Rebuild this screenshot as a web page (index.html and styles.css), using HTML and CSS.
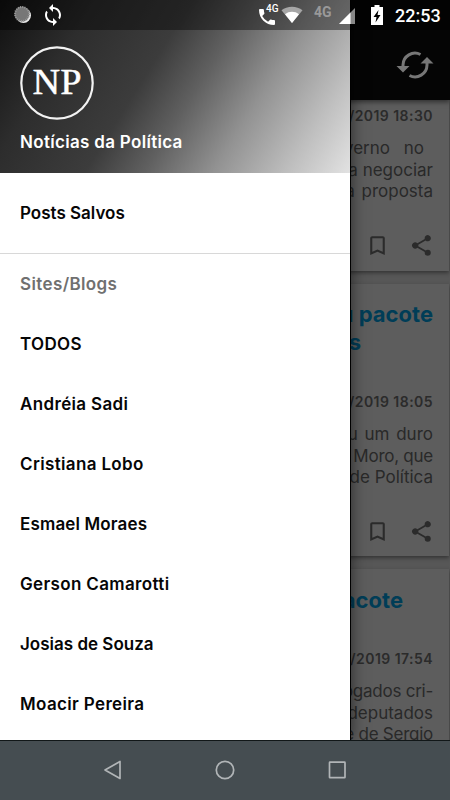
FILE: index.html
```html
<!DOCTYPE html>
<html lang="pt-BR">
<head>
<meta charset="utf-8">
<title>Notícias da Política</title>
<link rel="stylesheet" href="styles.css">
</head>
<body>
<div class="phone">
  <main class="feed">
    <header class="appbar">
      <svg width="38" height="30" viewBox="0 0 38 30"><g fill="none" stroke="#777" stroke-width="3"><path d="M7 18V15A12 12 0 0 1 24.500 4.500"/><path d="M31 12V15A12 12 0 0 1 13.500 25.500"/></g><path d="M.5 16h13L7 22.500zM24.500 13.500h13L31 7z" fill="#777"/></svg>
    </header>
    <article class="card first">
      <time>1/2019 18:30</time>
      <div class="excerpt"><p class="short">governo no</p><p>a negociar</p><p class="wide">a proposta</p></div>
      <div class="actions">
        <svg width="25" height="25" viewBox="0 0 24 24"><path d="M17 3H7c-1.100 0-2 .9-2 2v16l7-3 7 3V5c0-1.100-.9-2-2-2zm0 15-5-2.180L7 18V5h10z"/></svg>
        <svg width="25" height="25" viewBox="0 0 24 24"><path d="M18 16.080c-.76 0-1.440.3-1.960.77L8.910 12.700c.05-.23.09-.46.09-.7s-.04-.47-.09-.7l7.050-4.110A3 3 0 1 0 15 5c0 .24.040.47.090.7L8.040 9.810a3 3 0 1 0 0 4.380l7.120 4.160c-.05.21-.08.43-.08.65a2.920 2.920 0 1 0 2.920-2.920z"/></svg>
      </div>
    </article>
    <article class="card second">
      <h2><span>u pacote</span><span class="tail">s</span></h2>
      <time>1/2019 18:05</time>
      <div class="excerpt"><p class="wide">u um duro</p><p class="tight">Moro, que</p><p>de Política</p></div>
      <div class="actions">
        <svg width="25" height="25" viewBox="0 0 24 24"><path d="M17 3H7c-1.100 0-2 .9-2 2v16l7-3 7 3V5c0-1.100-.9-2-2-2zm0 15-5-2.180L7 18V5h10z"/></svg>
        <svg width="25" height="25" viewBox="0 0 24 24"><path d="M18 16.080c-.76 0-1.440.3-1.960.77L8.910 12.700c.05-.23.09-.46.09-.7s-.04-.47-.09-.7l7.050-4.110A3 3 0 1 0 15 5c0 .24.040.47.090.7L8.040 9.810a3 3 0 1 0 0 4.380l7.120 4.160c-.05.21-.08.43-.08.65a2.920 2.920 0 1 0 2.920-2.920z"/></svg>
      </div>
    </article>
    <article class="card third">
      <h2><span class="acote">pacote</span></h2>
      <time>1/2019 17:54</time>
      <div class="excerpt"><p class="tight">ogados cri-</p><p>deputados</p><p class="tight">e de Sergio</p></div>
    </article>
  </main>

  <aside class="drawer">
    <header class="profile">
      <svg class="logo" width="76" height="76" viewBox="0 0 76 76"><circle cx="38" cy="38" r="35.700" fill="none" stroke="#f2f2f2" stroke-width="2.200"/><text x="38" y="48.500" text-anchor="middle" textLength="49" lengthAdjust="spacingAndGlyphs">NP</text></svg>
      <h1>Notícias da Política</h1>
    </header>
    <nav>
      <a class="saved">Posts Salvos</a>
      <div class="label">Sites/Blogs</div>
      <a class="loose">TODOS</a>
      <a class="loose">Andréia Sadi</a>
      <a class="loose">Cristiana Lobo</a>
      <a class="snug">Esmael Moraes</a>
      <a class="loose">Gerson Camarotti</a>
      <a>Josias de Souza</a>
      <a class="loose">Moacir Pereira</a>
    </nav>
  </aside>

  <div class="status">
    <svg class="spin" width="20" height="20" viewBox="0 0 20 20"><circle cx="10.500" cy="10.500" r="7.500" fill="#e8e8e8"/><circle cx="9" cy="9" r="7.500" fill="#777"/><circle cx="9" cy="9" r="7" fill="none" stroke="#999" stroke-width="2" stroke-dasharray="1 1.200"/></svg>
    <svg class="sync" width="20" height="22" viewBox="2 1 20 22"><path fill="#fff" d="M12 4V1L8 5l4 4V6c3.310 0 6 2.690 6 6 0 1.010-.25 1.970-.7 2.800l1.460 1.460A7.930 7.930 0 0 0 20 12c0-4.420-3.580-8-8-8zm0 14c-3.310 0-6-2.690-6-6 0-1.010.25-1.970.7-2.800L5.240 7.740A7.930 7.930 0 0 0 4 12c0 4.420 3.580 8 8 8v3l4-4-4-4z"/></svg>
    <span class="call"><svg width="16" height="16" viewBox="3 3 18 18"><path fill="#fff" d="M20 15.500c-1.250 0-2.450-.2-3.570-.57a1 1 0 0 0-1.020.24l-2.200 2.200a15.050 15.050 0 0 1-6.590-6.590l2.200-2.210c.28-.26.36-.65.25-1C8.700 6.450 8.500 5.250 8.500 4c0-.55-.45-1-1-1H4c-.55 0-1 .45-1 1 0 9.390 7.610 17 17 17 .55 0 1-.45 1-1v-3.500c0-.55-.45-1-1-1z"/></svg><b>4G</b></span>
    <svg class="wifi" width="22" height="18" viewBox="0 0 22 18"><path fill="#a6a6a6" d="M11 17 .5 4.300C6-.6 16-.6 21.500 4.300z"/><path fill="#fff" d="M11 17 4 8.300c4-3.300 10-3.300 14 0z"/></svg>
    <span class="net">4G</span>
    <svg class="signal" width="16" height="16" viewBox="0 0 16 16"><path fill="#888" d="M0 16 16 0v16z"/><path fill="#fff" d="M0 16 11.500 4.500V16z"/></svg>
    <svg class="battery" width="12" height="20" viewBox="0 0 12 20"><path fill="#fff" d="M3.500 0h5v2H12v18H0V2h3.500z"/><path fill="#000" d="M7.500 5 2.500 12h3l-1 5.500 5-7.500h-3z"/></svg>
    <span class="clock">22:53</span>
  </div>

  <div class="navbar">
    <svg width="20" height="20" viewBox="0 0 20 20"><path d="M2 10 17 1.500v17z"/></svg>
    <svg width="20" height="20" viewBox="0 0 20 20"><circle cx="10" cy="10" r="8.700"/></svg>
    <svg width="20" height="20" viewBox="0 0 20 20"><rect x="2.500" y="2.200" width="15.500" height="15.500" rx=".5"/></svg>
  </div>
</div>
</body>
</html>
```
FILE: styles.css
```css
* { box-sizing: border-box; }
body { margin: 0; font-family: Inter, "Liberation Sans", sans-serif; }
h1, h2, p { margin: 0; }
svg { display: block; flex: none; }
.phone { position: relative; width: 450px; height: 800px; overflow: hidden; display: flex; flex-direction: column; background: #575757; }

.feed { height: 740px; overflow: hidden; display: flex; flex-direction: column; }
.appbar { position: relative; height: 100px; flex: none; background: #050505; padding: 50px 16px 0 0; display: flex; justify-content: flex-end; align-items: flex-start; box-shadow: 0 2px 5px rgba(0,0,0,.5); }
.card { flex: none; margin-right: 1px; padding-right: 16px; background: #5d5d5d; box-shadow: 0 2px 4px rgba(0,0,0,.4); display: flex; flex-direction: column; align-items: flex-end; white-space: nowrap; }
.first { height: 171px; padding-top: 6px; margin-bottom: 13px; }
.second { height: 272px; padding-top: 16px; margin-bottom: 13px; }
.third { height: 272px; padding-top: 17px; }
.card time { font-size: 14px; font-weight: 600; line-height: 20px; color: #2b2b2b; letter-spacing: .45px; }
.excerpt { margin-top: 12px; font-size: 17px; line-height: 21.700px; color: #292929; text-align: right; }
.short { padding-right: 9px; word-spacing: 9px; }
.wide { word-spacing: 2px; }
.tight { letter-spacing: -.25px; }
.card h2 { width: 100%; height: 92px; font-size: 22px; line-height: 28px; font-weight: 700; color: #003d57; display: flex; flex-direction: column; align-items: flex-end; }
.card.third h2 { height: 63px; }
.tail { padding-right: 72px; }
.acote { padding-right: 30px; }
.actions { display: flex; gap: 19px; margin: 30px -1px 0 0; fill: #2b2b2b; }

.drawer { position: absolute; left: 0; top: 0; width: 350px; height: 740px; background: #fff; box-shadow: 1px 0 0 #000, 2px 0 14px rgba(0,0,0,.5); clip-path: inset(0 -30px 0 0); }
.profile { height: 173px; padding: 45px 20px 0 19px; background: linear-gradient(122deg, #101010 0%, #2d2d2d 21%, #3c3c3c 42%, #606060 55%, #929292 70%, #bebebe 86%, #e2e2e2 100%); }
.logo text { font-family: "Liberation Serif", serif; font-size: 35px; fill: #fff; stroke: #fff; stroke-width: .4px; }
h1 { margin: 9px 0 0 1px; font-size: 17px; line-height: 24px; font-weight: 600; color: #fff; letter-spacing: .31px; }
nav { display: flex; flex-direction: column; padding-top: 10px; font-size: 17px; font-weight: 600; color: #060606; }
nav a, .label { height: 60px; line-height: 60px; padding-left: 20px; }
nav .saved { height: 71px; border-bottom: 1px solid #d8d8d8; }
.label { color: #707070; letter-spacing: .38px; }
.loose { letter-spacing: .35px; }
.snug { letter-spacing: .15px; }

.status { position: absolute; left: 0; top: 0; width: 450px; height: 30px; background: rgba(0,0,0,.4); color: #fff; display: flex; align-items: center; padding-left: 13px; }
.sync { margin-left: 10px; }
.call { flex: none; margin-left: 196px; display: flex; width: 20px; padding-top: 3px; position: relative; }
.call b { position: absolute; left: 7px; top: -3px; font: 500 10px/12px Roboto, sans-serif; }
.wifi { margin-left: 2px; }
.net { flex: none; margin: -7px 0 0 11px; width: 19px; font: 700 14px/16px Roboto, sans-serif; color: #999; }
.signal { margin: 2px 0 0 6px; }
.battery { margin-left: 16px; }
.clock { margin: 1px 0 0 12px; font: 500 18px/22px Roboto, sans-serif; }

.navbar { height: 60px; background: #454d51; border-top: 1px solid #111718; display: flex; justify-content: center; align-items: center; gap: 92px; }
.navbar svg { fill: none; stroke: #b1b5b7; stroke-width: 1.700; stroke-linejoin: round; position: relative; top: -1px; }
```
